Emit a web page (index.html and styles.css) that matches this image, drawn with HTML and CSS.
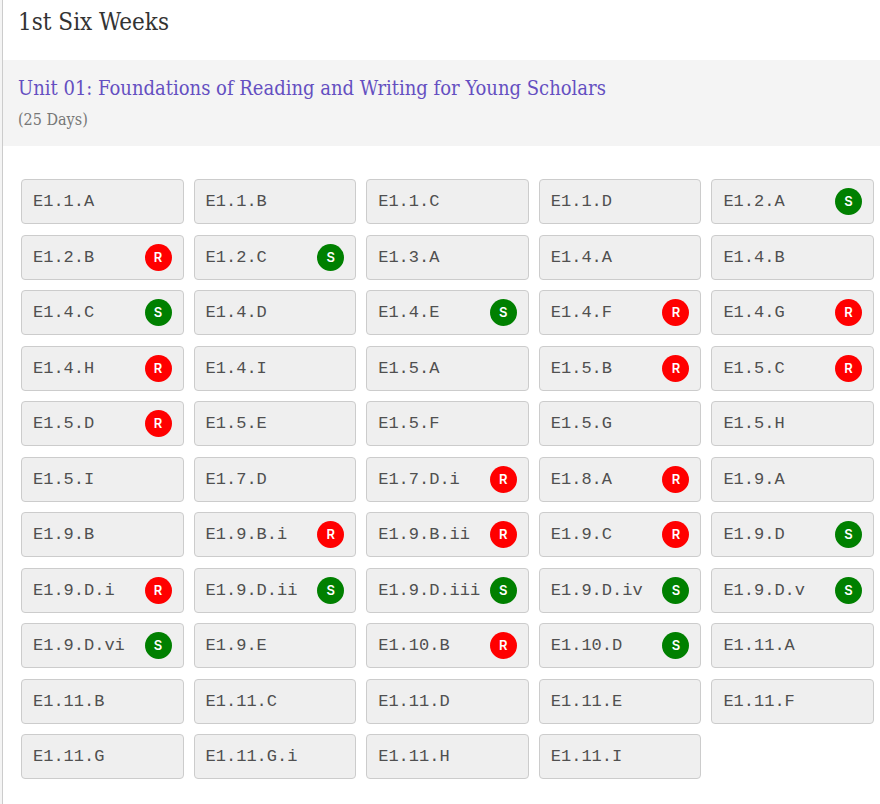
FILE: index.html
```html
<!DOCTYPE html>
<html lang="en">
<head>
    <meta charset="UTF-8">
    <meta name="viewport" content="width=device-width, initial-scale=1.0">
    <title>1st Six Weeks</title>
    <link rel="stylesheet" href="styles.css">
</head>
<body>
    <main class="page">
        <h1 class="period">1st Six Weeks</h1>
        <header class="unit">
            <h2 class="unit-title"><a href="#unit-01">Unit 01: Foundations of Reading and Writing for Young Scholars</a></h2>
            <p class="unit-days">(25 Days)</p>
        </header>
        <div class="standards" id="unit-01">
            <button class="standard">E1.1.A</button>
            <button class="standard">E1.1.B</button>
            <button class="standard">E1.1.C</button>
            <button class="standard">E1.1.D</button>
            <button class="standard">E1.2.A <span class="badge supporting">S</span></button>

            <button class="standard">E1.2.B <span class="badge readiness">R</span></button>
            <button class="standard">E1.2.C <span class="badge supporting">S</span></button>
            <button class="standard">E1.3.A</button>
            <button class="standard">E1.4.A</button>
            <button class="standard">E1.4.B</button>

            <button class="standard">E1.4.C <span class="badge supporting">S</span></button>
            <button class="standard">E1.4.D</button>
            <button class="standard">E1.4.E <span class="badge supporting">S</span></button>
            <button class="standard">E1.4.F <span class="badge readiness">R</span></button>
            <button class="standard">E1.4.G <span class="badge readiness">R</span></button>

            <button class="standard">E1.4.H <span class="badge readiness">R</span></button>
            <button class="standard">E1.4.I</button>
            <button class="standard">E1.5.A</button>
            <button class="standard">E1.5.B <span class="badge readiness">R</span></button>
            <button class="standard">E1.5.C <span class="badge readiness">R</span></button>

            <button class="standard">E1.5.D <span class="badge readiness">R</span></button>
            <button class="standard">E1.5.E</button>
            <button class="standard">E1.5.F</button>
            <button class="standard">E1.5.G</button>
            <button class="standard">E1.5.H</button>

            <button class="standard">E1.5.I</button>
            <button class="standard">E1.7.D</button>
            <button class="standard">E1.7.D.i <span class="badge readiness">R</span></button>
            <button class="standard">E1.8.A <span class="badge readiness">R</span></button>
            <button class="standard">E1.9.A</button>

            <button class="standard">E1.9.B</button>
            <button class="standard">E1.9.B.i <span class="badge readiness">R</span></button>
            <button class="standard">E1.9.B.ii <span class="badge readiness">R</span></button>
            <button class="standard">E1.9.C <span class="badge readiness">R</span></button>
            <button class="standard">E1.9.D <span class="badge supporting">S</span></button>

            <button class="standard">E1.9.D.i <span class="badge readiness">R</span></button>
            <button class="standard">E1.9.D.ii <span class="badge supporting">S</span></button>
            <button class="standard">E1.9.D.iii <span class="badge supporting">S</span></button>
            <button class="standard">E1.9.D.iv <span class="badge supporting">S</span></button>
            <button class="standard">E1.9.D.v <span class="badge supporting">S</span></button>

            <button class="standard">E1.9.D.vi <span class="badge supporting">S</span></button>
            <button class="standard">E1.9.E</button>
            <button class="standard">E1.10.B <span class="badge readiness">R</span></button>
            <button class="standard">E1.10.D <span class="badge supporting">S</span></button>
            <button class="standard">E1.11.A</button>

            <button class="standard">E1.11.B</button>
            <button class="standard">E1.11.C</button>
            <button class="standard">E1.11.D</button>
            <button class="standard">E1.11.E</button>
            <button class="standard">E1.11.F</button>

            <button class="standard">E1.11.G</button>
            <button class="standard">E1.11.G.i</button>
            <button class="standard">E1.11.H</button>
            <button class="standard">E1.11.I</button>
        </div>
    </main>
</body>
</html>
```

FILE: styles.css
```css
* {
    box-sizing: border-box;
}
body {
    margin: 0;
    padding-left: 2px;
    background-color: #f4f4f4;
    color: #333;
    font-family: 'Roboto Slab', 'DejaVu Serif Condensed', 'DejaVu Serif', serif;
}
.page {
    display: flex;
    flex-direction: column;
    min-height: 100vh;
    background-color: #fff;
    border-left: 1px solid #ccc;
}
.period {
    margin: 0;
    padding: 6px 15px 22px;
    font-size: 24px;
    font-weight: 400;
    line-height: 32px;
}
.unit {
    padding: 14px 15px;
    background-color: #f4f4f4;
}
.unit-title {
    margin: 0 0 6px;
    font-size: 20px;
    font-weight: 400;
    line-height: 28px;
}
.unit-title a {
    color: #644fc1;
    text-decoration: none;
}
.unit-days {
    margin: 0;
    color: #777;
    font-size: 16px;
    line-height: 24px;
}
.standards {
    flex: 1;
    display: grid;
    grid-template-columns: repeat(5, 1fr);
    grid-auto-rows: 45px;
    align-content: space-between;
    gap: 10px;
    padding: 33px 6px 25px 18px;
}
.standard {
    display: flex;
    justify-content: space-between;
    align-items: center;
    padding: 0 11px;
    border: 1px solid #ccc;
    border-radius: 4px;
    background-color: #efefef;
    color: #505050;
    font-family: 'Liberation Mono', monospace;
    font-size: 17px;
    text-align: left;
    cursor: pointer;
}
.badge {
    flex: none;
    width: 27px;
    border-radius: 50%;
    color: #fff;
    font-family: Inter, sans-serif;
    font-size: 13px;
    font-weight: 600;
    line-height: 27px;
    text-align: center;
}
.readiness {
    background-color: #f00;
}
.supporting {
    background-color: #008000;
}
```
